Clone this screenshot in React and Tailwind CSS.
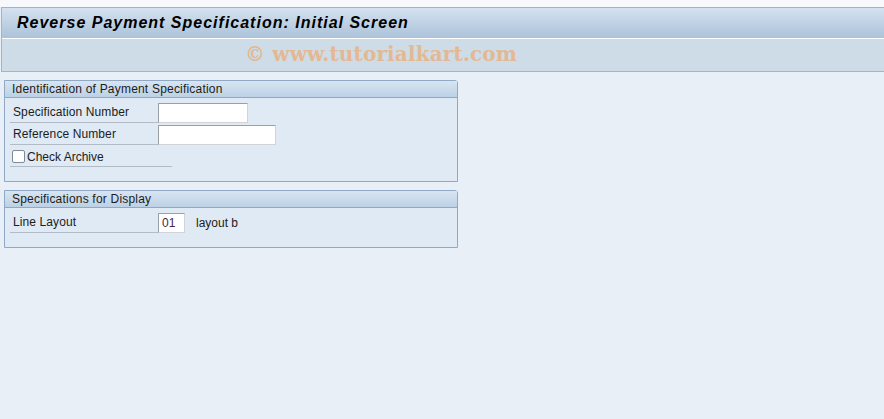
import React from 'react';

const ui = { fontFamily: '"Liberation Sans", Arial, sans-serif' };

function Field({ width, value }) {
  return (
    <div
      className={`h-[20px] ${width} bg-white border border-t-[#9aa0a6] border-l-[#9aa0a6] border-r-[#d0d4d8] border-b-[#d0d4d8] text-[12px] text-[#4b1f4b] pl-[3px] leading-[18px]`}
    >
      {value}
    </div>
  );
}

function Row({ label, children }) {
  return (
    <div className="flex items-end h-[22px]">
      <div className="w-[148px] border-b border-[#b3bcc6] pl-[3px] text-[12px] text-[#1c1c1c] leading-[19px] tracking-[0.1px]">
        {label}
      </div>
      {children}
    </div>
  );
}

function Group({ title, className, children }) {
  return (
    <div className={`w-[454px] ml-[4px] border border-[#8fa8c6] rounded-tr-[3px] bg-[#dfeaf4] ${className}`}>
      <div className="h-[17px] bg-gradient-to-b from-[#d8e5f2] to-[#bcd1e6] border-b border-[#8fa8c6] pl-[7px] text-[12px] leading-[16px] text-[#1c1c1c] tracking-[0.2px]">
        {title}
      </div>
      <div className="pl-[5px] pt-[3px]">{children}</div>
    </div>
  );
}

export default function App() {
  return (
    <div className="w-[884px] h-[419px] bg-[#e9eff7] overflow-hidden" style={ui}>
      <div className="h-[7px] bg-[#f6f8fc]" />
      <div className="ml-[1px] border-l border-t border-b border-[#a7b3c3]">
        <div className="h-[30px] bg-gradient-to-b from-[#d4e1ef] to-[#abc3da] flex items-center pl-[15px]">
          <span className="text-[16px] font-bold italic text-black tracking-[1px]">
            Reverse Payment Specification: Initial Screen
          </span>
        </div>
        <div className="h-[33px] border-t border-white bg-[#cedce7] flex items-start pt-[3px] pl-[243px]">
          <span
            className="text-[20px] font-bold text-[#e9b07d] opacity-80 leading-[24px] tracking-[0.15px]"
            style={{ fontFamily: '"DejaVu Serif", "Liberation Serif", serif' }}
          >
            © www.tutorialkart.com
          </span>
        </div>
      </div>

      <Group title="Identification of Payment Specification" className="mt-[8px] h-[102px]">
        <Row label="Specification Number">
          <Field width="w-[90px]" value="" />
        </Row>
        <Row label="Reference Number">
          <Field width="w-[118px]" value="" />
        </Row>
        <div className="flex items-end h-[22px]">
          <div className="w-[162px] border-b border-[#b3bcc6] flex items-center h-[20px] pl-[2px]">
            <div className="w-[13px] h-[13px] bg-white border border-[#7d8a99] rounded-[2px]" />
            <span className="ml-[2px] text-[12px] text-[#1c1c1c]">Check Archive</span>
          </div>
        </div>
      </Group>

      <Group title="Specifications for Display" className="mt-[8px] h-[58px]">
        <Row label="Line Layout">
          <Field width="w-[27px]" value="01" />
          <span className="ml-[11px] self-center text-[12px] text-[#1c1c1c] pt-[2px]">layout b</span>
        </Row>
      </Group>
    </div>
  );
}
